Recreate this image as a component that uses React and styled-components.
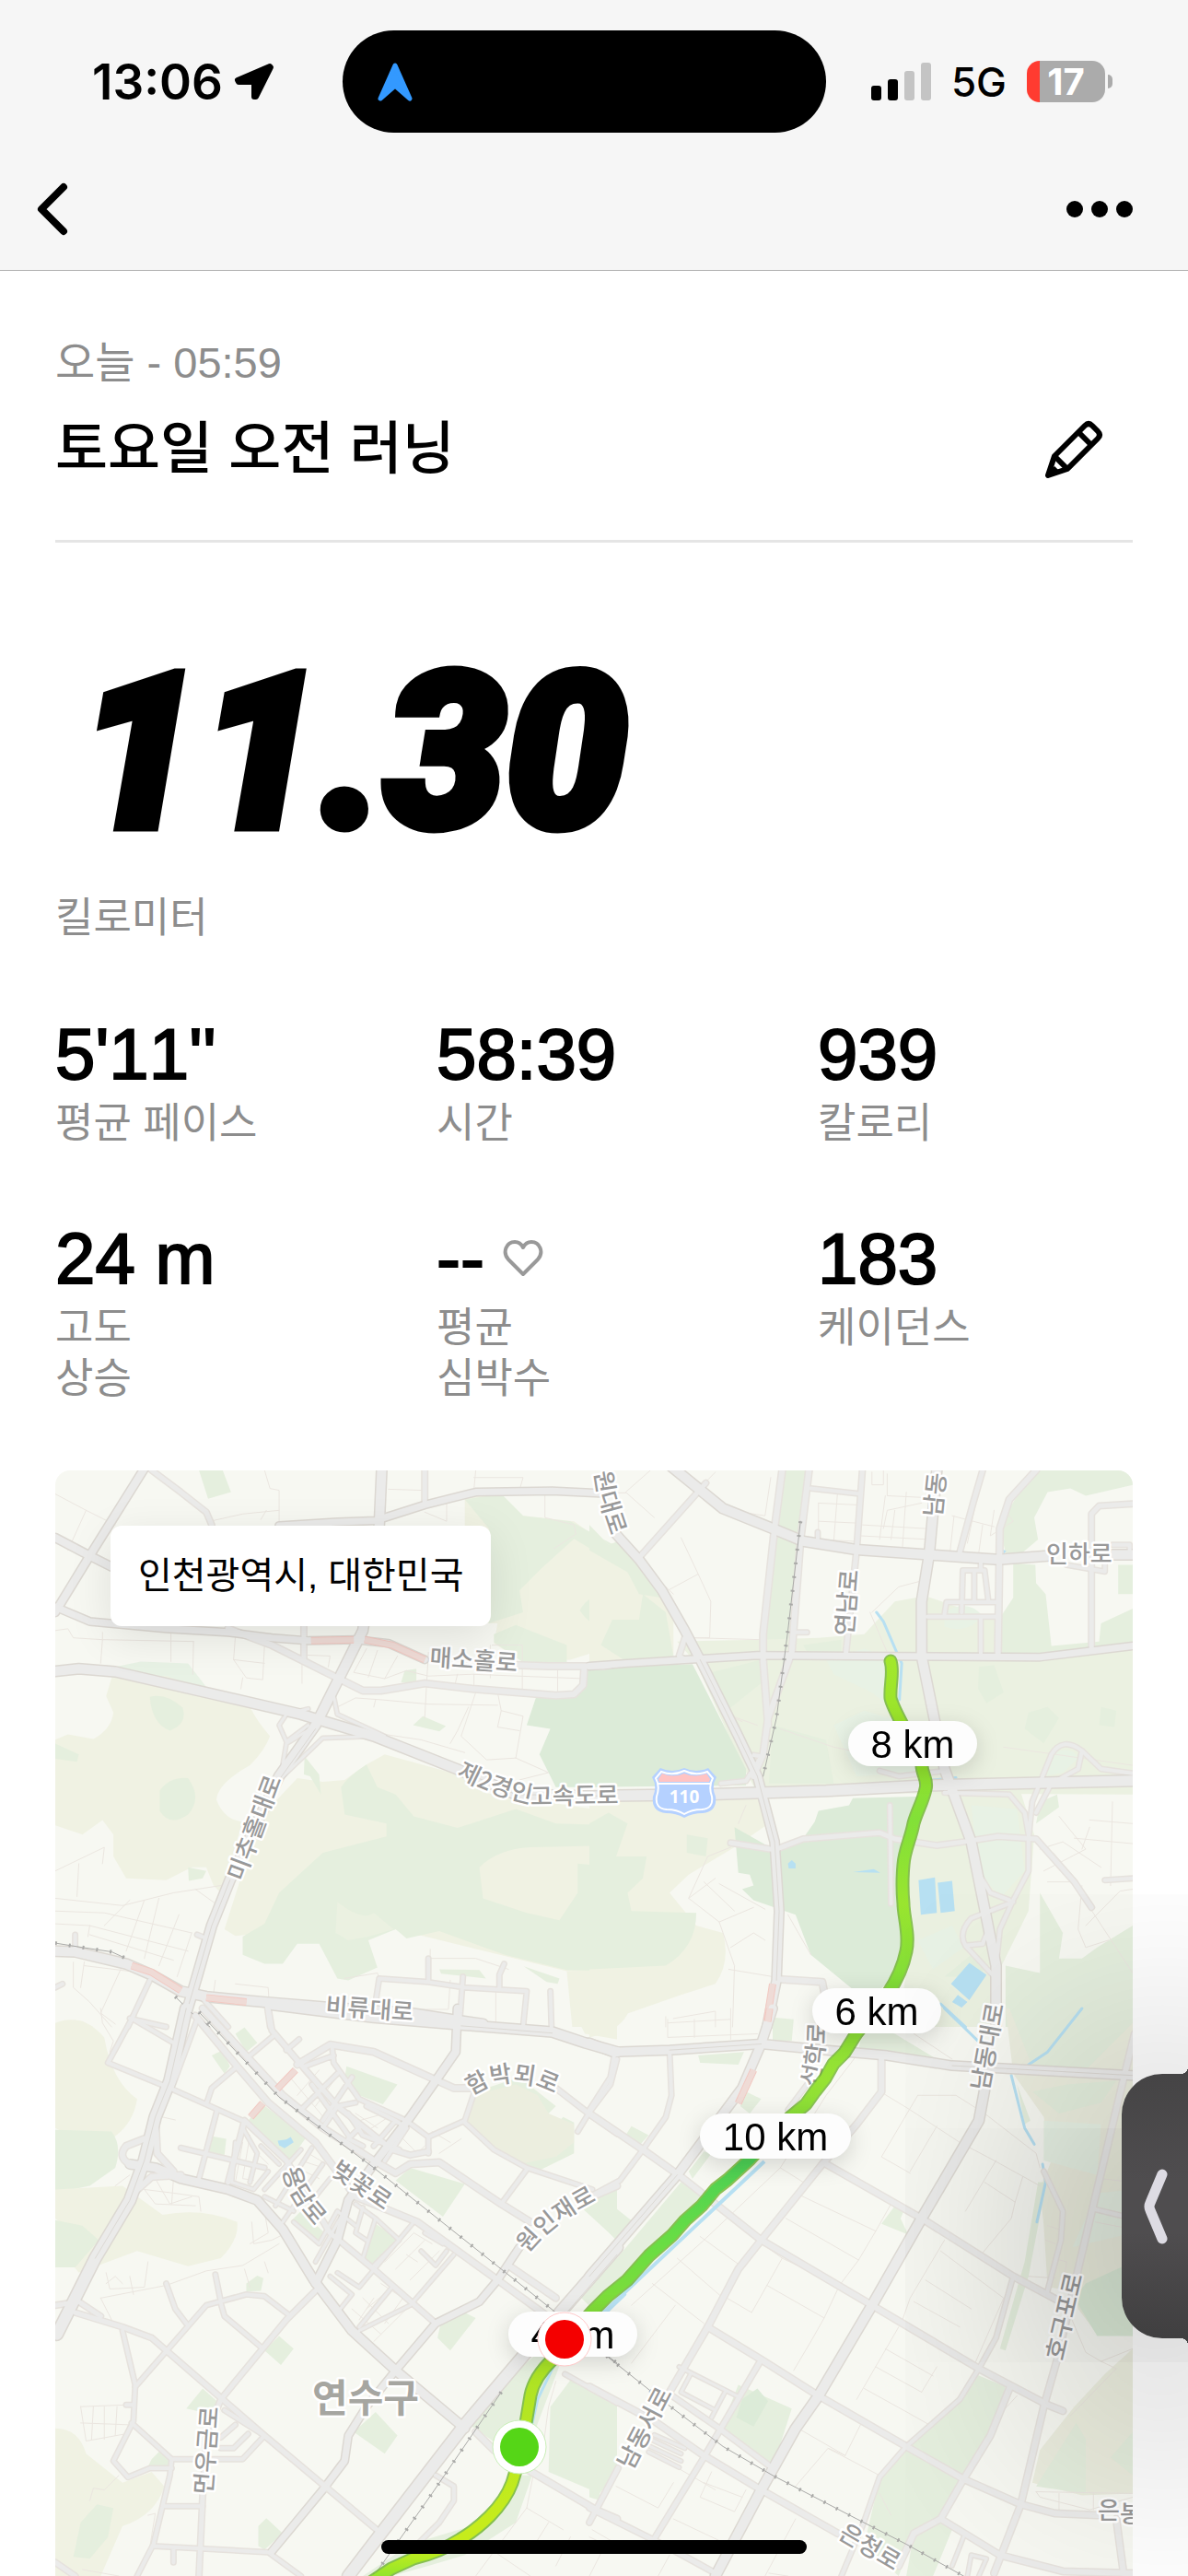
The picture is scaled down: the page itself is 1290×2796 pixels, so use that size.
import React from "react";
import styled, { createGlobalStyle } from "styled-components";

const GlobalStyle = createGlobalStyle`
  * {
    box-sizing: border-box;
  }
  body {
    margin: 0;
    background: #ffffff;
    color: #000000;
    font-family: "Liberation Sans", "Noto Sans CJK KR", sans-serif;
  }
  h1, p, dl, dt, dd {
    margin: 0;
    font-weight: 400;
  }
`;

const STATS = [
  { value: "5'11''", label: ["평균 페이스"] },
  { value: "58:39", label: ["시간"] },
  { value: "939", label: ["칼로리"] },
  { value: "24 m", label: ["고도", "상승"] },
  { value: "--", label: ["평균", "심박수"], heart: true },
  { value: "183", label: ["케이던스"] },
];

const GROUND = {
  hill: "#f0f2e3",
  mint: "#e8f2e5",
  wood: "#e5efde",
  park: "#dcebd8",
  field: "#ebf1e1",
  dusk: "#eceedf",
  lake: "#b7e0f2",
};

// Four map tiles, each in its own grid units. Roads are [width, path].
const TILES = [
  {
    at: "translate(50 1580) scale(0.3954)",
    areas: [
      ["mint", "M180 582 L260 565 L390 570 L440 635 L180 610Z"],
      ["hill", "M25 780 L60 765 L130 778 Q180 750 185 705 L165 660 L180 610 L330 605 L440 645 L560 690 Q580 730 615 770 Q600 810 560 850 Q470 900 468 945 Q490 1000 540 1005 L480 1200 L460 1180 L440 1130 L400 1130 L330 1165 L220 1160 L185 1100 L185 1040 L155 1000 L100 1040 L25 1015Z"],
      ["wood", "M285 662 Q330 650 375 692 Q390 735 340 755 Q290 735 285 662Z"],
      ["wood", "M312 920 Q340 880 390 885 Q430 940 390 985 Q340 1020 312 975Z"],
      ["wood", "M25 790 L90 820 L85 840 L25 832Z"],
      ["hill", "M880 848 L930 820 L1150 880 L1200 925 L1568 980 V1420 L1430 1415 L960 1300 L880 1320 L600 1310 L520 1318 L490 1300 L560 1080 L620 960 L690 885 L760 895 L820 890Z"],
      ["wood", "M810 910 Q830 880 880 848 L910 910 L960 930 L1010 990 L1130 1022 L1290 970 L1400 1010 L1568 1015 V1415 L1430 1412 L1260 1370 L1080 1305 L990 1325 L960 1300 L885 1330 L910 1405 L830 1440 L800 1435 L750 1340 L690 1340 L650 1395 L600 1395 L540 1370 L540 1320 L600 1285 L640 1200 L760 1090 L935 1045 L935 1010 L820 985Z"],
      ["field", "M800 1225 Q870 1280 900 1255 L955 1300 L885 1320 L830 1330 L795 1310Z"],
      ["hill", "M1190 1130 Q1240 1080 1330 1075 L1568 1070 V1130 L1460 1120 L1460 1200 L1410 1275 L1320 1255 L1200 1215Z"],
      ["hill", "M1150 110 L1250 105 L1310 165 L1450 180 L1540 245 L1568 240 V520 L1440 560 L1310 565 L1230 515 L1240 460 L1100 460 L1150 300Z"],
      ["wood", "M1150 120 L1250 105 L1310 165 L1440 180 L1568 250 V300 L1450 228 L1360 310 L1300 370 L1310 430 L1216 460 V200Z"],
      ["wood", "M1466 425 Q1490 375 1568 380 V470 Q1500 480 1466 425Z"],
      ["wood", "M1230 490 L1290 465 L1430 520 L1430 567 L1310 567 L1230 512Z"],
      ["park", "M1480 590 L1568 582 V910 L1400 910 L1355 820 L1385 750 L1320 740 L1345 665 L1460 660Z"],
      ["wood", "M420 40 L485 40 L508 100 L445 118Z"],
      ["wood", "M985 590 L1017 585 V625 L975 622Z"],
      ["wood", "M1008 740 L1035 715 L1098 742 L1080 757Z"],
      ["wood", "M1080 1410 L1190 1412 L1208 1435 L1085 1422Z"],
      ["wood", "M1312 1402 L1410 1435 L1405 1450 L1375 1445Z"],
      ["wood", "M390 1130 L440 1140 L430 1160 L392 1167Z"],
      ["wood", "M710 825 L750 875 L755 930 L725 880 L708 875Z"],
      ["hill", "M1430 1415 H1568 V1568 H1445Z"],
      ["hill", "M25 1560 Q60 1545 100 1552 L130 1568 H25Z"],
    ],
    lanes:
      "M25 105 L110 150 L190 190 M60 260 L110 150 M600 40 L615 90 L640 95 V190 M460 178 L540 160 L640 150 M590 175 L605 150 M940 92 L1030 95 M1040 155 L1100 180 V130 M1175 60 H1310 L1300 95 M1180 40 L1175 95 M1370 105 V170 L1450 190 L1455 215 L1395 255 M25 480 L60 475 L75 500 L155 505 L150 570 M155 485 V505 L405 510 M343 485 V565 M405 510 L403 600 M520 495 L515 560 L550 610 L595 615 L600 520 M515 560 L600 570 M540 610 L535 640 M660 545 L780 550 L775 580 M703 555 V625 M880 530 L845 595 L930 612 L990 590 L1050 605 L1170 600 L1478 612 M910 535 L885 608 M965 550 L930 612 M1050 540 L1040 720 M800 690 L850 665 L920 670 L1050 682 L1240 685 M905 670 L900 690 M1130 600 L1120 640 M1175 600 V650 M1225 520 H1308 V650 M1220 520 V610 M1405 590 V655 M1240 650 L1250 700 L1310 715 L1290 830 L1210 835 L1140 770 L1180 650 M1110 790 L1130 755 L1160 690 M930 765 L1030 780 L1150 815 M1290 830 L1380 870 L1300 890 M1250 700 L1240 745 L1300 755 M25 1140 L160 1075 L155 1120 M90 1120 L85 1210 M25 1215 L210 1235 L350 1200 L480 1180 M25 1250 L160 1255 L400 1310 M25 1285 L120 1290 L390 1360 M120 1290 L115 1320 M120 1315 L350 1385 M270 1220 L220 1360 M310 1215 L270 1380 M365 1260 L310 1400 M410 1190 L480 1240 M400 1310 L360 1430 M230 1220 L160 1290 M75 1390 V1460 L120 1500 L180 1568 M105 1390 L95 1460 M205 1410 L150 1530 L190 1560 M105 1400 L270 1420 M465 1440 L460 1475 M520 1450 L610 1460 L612 1490 M820 1435 L910 1420 L915 1435 M1055 1355 V1380 L1180 1380 L1270 1410 M1110 1440 L1105 1520 L1000 1520 M1235 1470 V1568",
    roads: [
      [8, "M290 40 L370 100 L440 155 L455 190"],
      [8, "M1040 40 V135 M708 470 V560"],
      [11, "M270 35 L120 275 L25 430 M25 225 L120 275 L180 305"],
      [10, "M640 192 L800 182 L905 178 L1040 135 L1180 100 L1390 97 L1520 103"],
      [9, "M500 475 L620 520 L800 610 L870 645 L920 645 L1040 625 L1170 640 L1400 658 L1450 655 L1475 630 L1478 585"],
      [10, "M25 415 L120 455 L330 475 L500 485 L620 500 L720 508 L850 505 L940 515 L1040 560"],
      [9, "M1290 575 L1380 578 L1530 578 L1568 572"],
      [7, "M905 1500 L915 1435 L1050 1445 L1150 1460 L1320 1470 L1310 1568 M1050 1445 V1380 M1145 1430 L1135 1568 M1245 1460 V1425 L1258 1395 M1385 1470 L1388 1568 M80 1315 V1355 M415 1315 L440 1325 M285 1440 L225 1568 M605 1500 L615 1568 M430 1490 L500 1568 M230 1545 L330 1568 M25 1460 L45 1450"],
      [6, "M720 740 L660 785 L640 740 L660 710 L720 695 M790 660 L800 710 L930 770 M650 850 L660 790 L735 745 M640 890 L760 775 L900 770"],
      [13, "M25 1360 L80 1362 L220 1395 L290 1425 L370 1470 L440 1485 L600 1500 L780 1515 L1000 1530 L1130 1550 L1200 1560"],
      [13, "M922 35 L915 190 L900 300 L870 480 L800 620 L740 740 L640 880 L505 1165 L455 1290 L400 1480 L370 1580"],
      [13, "M25 592 L90 585 L190 593 L440 650 L700 710 L900 770 L1140 865 L1290 930 L1568 935"],
    ],
    dualLanes: "M640 890 L740 750 M505 1165 L455 1290 L400 1480 L370 1580 M1140 865 L1290 930 L1568 935",
    rails: "M25 1338 L100 1350 L180 1362 L215 1378 M355 1485 L400 1530 L450 1568",
    rush: "M728 508 L845 505 M875 505 L950 520 L1040 560 M235 1400 L290 1418 L370 1468 M440 1488 L550 1500",
    streams: "",
  },
  {
    at: "translate(640 1580) scale(0.4146 0.3954)",
    areas: [
      ["wood", "M505 40 L575 40 L555 200 L520 540 L455 540 L480 200Z"],
      ["hill", "M0 190 L50 245 L90 230 L180 340 L220 450 V550 L0 575Z"],
      ["wood", "M0 190 L50 245 L90 230 L180 340 L190 390 L130 380 L100 320 L0 260Z M60 450 L130 450 L140 380 L200 430 L220 550 L90 560 L30 520Z"],
      ["field", "M230 510 L440 505 L600 500 L720 490 L800 400 L880 385 L1060 450 L1210 525 L1423 520 V930 L440 925 L400 850 L280 570Z"],
      ["wood", "M300 600 L450 560 L455 620 L360 700Z M560 520 L660 505 L660 540 L570 540Z M480 740 L620 780 L640 900 L470 900Z M1020 580 L1060 575 L1085 650 L1040 680 L1018 640Z M1150 705 L1200 690 L1230 720 L1190 790 L1140 750Z M1340 690 L1380 700 L1375 745 L1335 740Z"],
      ["mint", "M620 560 L720 530 L800 560 L780 620 L800 700 L740 650 L640 600Z M930 430 Q990 390 1030 440 Q990 490 930 470Z M640 740 L720 700 L850 740 L870 870 L700 880Z"],
      ["park", "M0 582 L270 572 L410 860 V905 L0 910Z"],
      ["hill", "M0 950 L440 925 L470 1010 L380 1075 L260 1150 L210 1200 L280 1290 L350 1310 Q370 1390 330 1450 L240 1480 L0 1568Z"],
      ["wood", "M0 1010 L50 980 L100 1010 L70 1100 L150 1100 L140 1160 L100 1200 L110 1250 L280 1255 Q280 1350 200 1400 L0 1410Z M255 1040 L310 1050 L305 1100 L255 1090Z"],
      ["park", "M380 1020 L490 1085 L560 1050 L590 1005 L600 975 L680 960 L690 940 L880 935 L850 1010 L820 1100 L810 1250 L830 1350 L790 1440 L720 1500 L690 1465 L580 1370 L540 1260 L430 1220 L400 1190 L430 1180 L420 1150 L390 1145Z"],
      ["field", "M880 925 L1130 925 L1165 1040 L1150 1250 L1070 1420 V1568 H900 L820 1480 L850 1300 L830 1150Z"],
      ["mint", "M1000 960 L1120 970 L1140 1140 L1080 1210 L1020 1150Z M860 1330 L950 1290 L980 1350 L900 1410Z M1210 820 Q1260 790 1280 830 L1240 870 L1190 880Z"],
      ["wood", "M1180 40 L1423 40 V80 L1300 110 L1260 90 L1200 100 L1165 170 L1175 230 L1130 270 L1090 270 L1075 190 L1120 110Z"],
      ["wood", "M1110 295 L1168 300 L1170 350 L1195 380 L1210 522 L1335 510 L1340 460 L1423 420 V530 L1180 555 L1070 555 L1072 450 L1110 390Z M1385 300 H1423 V380 H1385Z"],
      ["wood", "M1170 1010 L1230 965 L1225 930 L1180 950Z M1423 1290 L1330 1350 L1290 1380 L1230 1380 L1240 1310 L1180 1200 L1180 1420 L1090 1400 V1568 H1423Z M930 1430 L1000 1370 L1040 1410 L990 1430Z"],
      ["lake", "M862 1165 L905 1158 L910 1255 L868 1260Z M912 1172 L950 1167 L957 1250 L920 1255Z M995 1392 L1040 1425 L995 1495 L947 1450Z M965 1480 L990 1500 L975 1515 L950 1500Z M520 1120 L530 1110 L540 1120 V1133 H522Z M1078 255 L1092 262 L1085 270Z M690 1143 L745 1135 L762 1145Z"],
    ],
    lanes:
      "M160 40 L95 100 L170 170 M0 102 H95 M330 45 L260 120 M360 145 L400 155 L460 165 L475 60 M205 370 L285 325 L240 225 M285 325 L318 400 L315 500 L250 500 M200 360 L220 380 M275 500 L450 505 M600 130 L700 135 M600 180 L700 185 M600 230 L695 235 M650 100 L640 235 M600 130 V215 M740 45 V80 H770 V40 M780 50 V110 L880 115 M830 100 L820 250 M775 110 L760 230 M870 130 L780 150 L770 200 M715 190 L880 200 M710 220 L890 230 M800 150 L790 230 M950 165 L1060 195 M955 165 L945 260 M1010 140 L990 240 M1060 150 L1050 220 L1110 180 L1085 145 M1030 190 L1020 265 M740 430 L810 360 L865 345 M735 430 L780 540 M500 750 L640 800 L780 830 M400 730 L360 710 L440 740 M1085 800 L1423 850 M370 1075 L310 1100 L260 1215 L340 1280 L430 1240 M340 1175 L460 1245 M260 1215 L330 1160 M300 1170 L380 1250 M340 1280 L380 1400 L375 1568 M370 1350 L430 1310 L460 1330 M200 1540 V1568 M220 1545 L330 1525 V1568 M365 1410 L480 1430 M580 1370 L520 1260 M1230 990 L1300 1080 L1190 1140 M1180 1080 L1240 1060 L1340 1130 M1270 1050 L1423 1065 M1310 1000 L1423 1010 M1310 1020 L1290 1080 M1370 950 L1365 1180 M1215 1090 L1280 1170 L1200 1170 M1290 1180 L1280 1300 L1300 1350 L1360 1330 M1423 1190 L1390 1195 L1300 1290 M1310 1240 L1423 1420 M410 960 L390 1010",
    roads: [
      [7, "M580 90 L710 105 M885 442 H1070 M930 435 L935 402 H1070 M1025 445 V545 M975 430 L978 315 H1035 L1045 400 M1008 315 V400 M1250 300 L1350 318 V290 M1370 245 H1415 V262 M1025 285 V310 M535 485 H570 M598 210 V240"],
      [8, "M305 75 L130 280 M1030 40 L1005 130 L970 265 M1315 530 V160 L1335 138 L1423 132 M250 560 L235 550 L250 500"],
      [8, "M715 40 L700 258 L672 540"],
      [9, "M505 40 L485 200 L455 490 V560 L468 740"],
      [9, "M575 40 L553 230 L530 540 L468 720 L455 820 L430 880"],
      [9, "M1170 40 L1100 120 L1075 200 L1070 545"],
      [13, "M215 30 L350 145 L480 200 L560 235 L700 258 L890 272 L1070 285 L1200 275 M1370 272 H1423"],
      [7, "M345 900 L410 893 L450 825 L430 822 M787 960 L790 1230 M760 865 L810 880 L930 865 M1350 1165 L1423 1160"],
      [8, "M370 1063 L485 1082 L560 1052 L760 1035 L800 1052 L910 1070 L980 1060 L1070 1045 L1170 1052 L1270 1170 L1315 1240"],
      [9, "M497 1437 L610 1445 L620 1500"],
      [7, "M1423 872 L1340 860 L1290 810 Q1240 770 1210 820 L1160 950 L1150 1050 V1140 L1110 1220 L1075 1300 L1065 1400 M1290 810 L1280 860 L1210 900 L1170 980 M930 925 L1100 930 L1140 980 L1150 1040 M1010 1130 L1050 1200 L1100 1220 M1110 1225 L1000 1270 Q965 1310 985 1345 L1030 1340 L1045 1300 M985 1345 L1060 1430"],
      [10, "M0 578 L100 570 L440 548 L700 550 L1180 553 L1423 522"],
      [13, "M910 40 L890 270 L870 400 V550 L930 860 L1000 1060 L1065 1400 V1568"],
      [12, "M65 210 L130 285 L190 370 L250 480 L290 560 L390 770 L440 880 L460 960 L485 1060 L497 1250 L490 1440 L465 1568"],
      [14, "M60 933 L300 930 L620 920 L890 905 L1423 892"],
    ],
    dualLanes: "M290 560 L390 770 L440 880 L460 960 L485 1060 L497 1250 L490 1440",
    rails: "M553 180 L520 480 L510 560 L490 720 L455 880",
    rush: "M480 1450 L465 1550",
    streams: "M752 430 L770 455 L805 540 L818 570 L812 670 M920 1505 L985 1568 M900 890 L960 884",
  },
  {
    at: "translate(50 2180) scale(0.3954 0.3929)",
    areas: [
      ["hill", "M25 40 Q100 10 160 80 Q180 200 250 250 Q240 320 180 360 L90 365 L25 330Z"],
      ["wood", "M25 335 L180 340 Q210 380 190 440 L120 490 L25 510Z"],
      ["hill", "M25 500 L210 490 L320 570 Q430 550 525 590 Q530 640 480 690 L390 712 L250 670 L90 730 Q50 690 80 620 L25 580Z"],
      ["wood", "M25 585 L100 600 L145 640 L80 715 H25Z"],
      ["hill", "M25 1160 Q90 1160 110 1230 L210 1310 L290 1280 L325 1320 Q300 1400 210 1430 L150 1568 H25Z"],
      ["wood", "M95 1420 L140 1370 L185 1380 L170 1460 L120 1520 L75 1515Z"],
      ["wood", "M595 265 L715 355 L670 420 L555 310Z M520 70 L545 52 L580 95 L550 120Z M455 130 L485 115 L505 160 L490 180Z M825 160 L965 210 L925 265 L860 240 L820 195Z"],
      ["wood", "M450 352 L495 360 L490 405 L440 400Z M1000 440 L1150 485 L1090 575 L960 475Z M1470 550 L1568 480 V640Z M905 595 L965 635 L900 710 L870 690Z M700 560 L765 620 L750 655 L675 585Z"],
      ["wood", "M550 760 L580 738 L597 745 L590 780 L550 782Z M640 905 L680 940 L645 985 L600 945Z M1085 865 L1140 835 L1180 855 L1110 945 L1075 910Z M430 1050 L475 1090 L450 1120 L385 1105Z"],
      ["wood", "M905 1115 L965 1180 L930 1230 L845 1170Z M605 1408 L650 1450 L600 1495 L583 1485 V1430Z M290 1245 L315 1220 L345 1250 V1270 L280 1265Z"],
      ["wood", "M1180 230 L1300 190 L1400 270 L1380 290Z M1420 300 L1450 315 V400 L1360 445 L1300 430Z"],
      ["dusk", "M1170 240 L1290 210 L1350 240 L1380 290 L1450 320 V370 L1400 410 L1300 430 L1230 390 L1155 310Z"],
      ["wood", "M1150 1140 L1340 960 L1420 960 L1330 1200 L1290 1240Z M1445 1020 L1568 1080 V1280 L1520 1340 L1380 1280 L1385 1100Z M1568 680 L1470 800 L1500 830 L1568 780Z M1300 1290 L1335 1290 L1290 1420 L1150 1510 L1050 1540 L950 1568 H870 L1000 1480 L1200 1420Z"],
      ["hill", "M1445 0 H1568 V85 L1480 70Z"],
      ["lake", "M636 365 L660 362 L672 355 L680 370 L655 386 L640 378Z"],
    ],
    lanes:
      "M150 0 L155 40 L185 90 L175 120 M320 300 L355 308 M190 490 L230 460 M270 500 L350 510 L420 520 L425 560 M300 470 L340 540 L400 520 M350 470 L345 540 M270 500 L300 540 L410 545 M565 590 L570 650 L620 640 L660 620 M600 560 L610 620 L560 650 M150 800 L330 765 L440 725 L540 710 L640 650 M165 730 L175 775 L270 770 L280 700 M165 760 L190 740 L210 760 M230 740 L240 790 M150 800 L180 860 M545 720 L560 770 M600 700 L610 730 M95 1100 L225 1095 M95 1145 L225 1150 M130 1100 L125 1190 M160 1100 V1190 M195 1100 L190 1180 M95 1100 L110 1195 L220 1175 M120 1360 L130 1325 L160 1330 L200 1290 M280 1400 L300 1395 L280 1520 M670 190 L770 310 M700 170 L770 250 M690 240 L750 170 M740 270 L790 200 M850 290 L910 330 M860 310 L930 290 M880 340 L940 300 M540 370 L520 480 M560 380 L610 430 M560 350 L540 470 L570 475 M690 440 L750 470 M700 420 L760 440 M720 400 L770 430 M970 350 L1020 400 L1040 380 M1060 340 L1110 370 M1080 400 L1140 360 M930 700 L1010 620 L1060 650 M960 720 L1040 640 M990 680 L1020 700 M1000 750 L1080 670 M880 830 L950 770 M840 830 L920 900 M870 800 L940 870 M860 860 L900 800 M900 920 L990 830 M920 760 L980 800 L930 870 M1340 1280 L1320 1380 L1420 1440 M1320 1380 L1230 1500 L1330 1568 M1380 1420 L1330 1500 M1440 1460 L1400 1540 M1230 1500 L1180 1568 M1500 1440 L1568 1480 M1400 1030 L1380 1100 L1360 1250 M100 1550 L200 1568",
    roads: [
      [6, "M700 390 L600 500 M730 385 L630 545 M760 430 L650 590 M520 370 L510 480 L570 500 L610 450 M540 330 L580 400 L560 480 M590 380 L640 430 M600 520 L680 560 M780 470 L740 520 L700 500"],
      [7, "M785 100 L790 150 L860 250 L990 310 L1050 355 M800 180 L700 280 M840 190 L760 310 M850 260 L800 270 L760 330 M830 290 L870 350 L970 390 M880 270 L960 310 L900 380 M960 310 L990 330 L930 420 M870 380 L830 360 L860 330 M710 160 L790 130 M730 210 L830 350"],
      [6, "M850 540 L905 580 L970 640 L900 710 M905 580 L870 690 M1010 590 L860 770 L800 730 M1120 680 L1000 820 L860 890 M1030 670 L1070 710 L1100 670 M870 550 L850 620 L880 640 M780 740 L840 790 L800 840 M950 770 L860 880 M850 600 L800 560 L750 650 L680 590 M740 700 L830 540 M1040 620 L1090 650"],
      [7, "M170 150 L340 220 L540 310 M170 150 L240 20 M240 30 L350 95 M525 160 L455 220 L440 265 M470 280 L420 470 M370 385 L600 440 M560 130 L625 75 M660 115 L695 85 M345 220 L415 30"],
      [8, "M545 310 L500 480 M545 310 L660 420 L780 620 L900 720 L1070 870"],
      [7, "M245 1045 L440 820 L550 790 L600 795 L665 845 M480 815 L490 850 L590 935 M330 760 L355 830 L385 870 M465 735 L480 810"],
      [7, "M210 890 L245 1040 L240 1140 L185 1250 L225 1295 L285 1270 H345 M235 1145 L345 1245 L340 1290 L295 1480 L250 1568 M345 1245 H540 L600 1180 M325 1375 H430 M295 1485 L610 1502 L700 1568 M350 1490 V1530 M480 1215 H515 L555 1175 M480 1185 L520 1150 M490 1110 L600 1180 M220 1095 H240"],
      [8, "M740 780 L660 860 L480 1080 L440 1180 L430 1350 L420 1568"],
      [7, "M1180 220 L1150 310 L1050 355 V400 M1150 315 L1230 390 L1320 440 L1500 500 M1320 445 L1250 540 M1568 140 L1550 210 L1490 290 L1460 340 M1070 1290 L1120 1320 V1360 L1080 1420 L1020 1480 M1425 1010 L1568 1090"],
      [8, "M610 0 L620 60 L700 155 L800 270 L950 390 L1000 405 L1050 395 M1400 220 L1490 290 L1568 345"],
      [9, "M690 155 L780 100 L900 120 L1120 220 L1180 220 M1568 490 L1500 520 M1270 710 L1400 800"],
      [9, "M410 20 L525 160 L610 260 L740 370 L850 520 L1020 590 L1130 670 L1240 750 L1390 860"],
      [9, "M430 0 L650 240 L760 330 L900 420 L960 455 L1000 430 L1080 425 L1250 540 L1330 590"],
      [10, "M1300 660 L1240 750 L1190 810 L1070 870 L960 1000 L880 1100 L830 1180 L820 1250 L760 1330 L620 1500"],
      [11, "M1130 0 L1125 120 L1070 200 L1000 300 L900 430 L830 530 L800 640 L740 760"],
      [8, "M80 840 L210 880 L290 910 L600 1180 L920 1450 M25 1530 L80 1568 M25 820 L90 810 L150 850"],
      [12, "M230 430 L300 440 L370 470 L500 500 L580 530 L650 610 L735 750 L840 890 L960 1000 L1150 1160"],
      [9, "M270 360 L220 380 Q195 410 230 430 M300 300 L305 400 L350 450 M1180 1170 L1230 1220 L1350 1290 L1510 1385 L1568 1410 M240 510 L290 465 L370 460"],
      [13, "M620 -10 L900 25 L1140 45 L1390 65 L1480 95 L1568 120"],
      [15, "M385 0 L340 200 L300 300 L270 420 L230 530 L135 690 L30 900"],
      [15, "M1568 660 L1420 830 L1150 1150 L920 1450 L830 1568"],
    ],
    dualLanes: "M385 0 L340 200 L300 300 L270 420 L230 530 L135 690 M1568 680 L1430 840 M1140 48 L1390 68",
    rails: "M420 10 L640 245 L900 440 L1250 720 L1400 840 M1530 950 L1568 980 M1250 1060 L1060 1340 L900 1568",
    rush: "M685 170 L635 222 M595 262 L562 300",
    streams: "M1590 790 L1400 975 L1350 1080 L1325 1190",
  },
  {
    at: "translate(640 2180) scale(0.4146 0.3929)",
    areas: [
      ["hill", "M0 0 H105 Q90 60 0 80Z"],
      ["dusk", "M1090 0 H1423 V905 L1330 900 L1280 830 L1270 780 L1200 770 L1190 600 L1180 500 L1210 420 L1190 300 L1110 180Z"],
      ["dusk", "M1423 940 L1350 1010 L1270 1100 L1180 1220 L1160 1310 L1290 1345 L1423 1340Z"],
      ["wood", "M1275 1145 L1300 1190 V1340 L1170 1320Z M1365 1240 L1423 1170 V1290Z M1160 230 L1250 210 L1380 200 L1340 260 L1230 290Z M1100 0 H1423 V40 L1300 170 L1160 160Z"],
      ["park", "M1300 760 L1423 700 V905 L1330 905 L1270 800Z"],
      ["mint", "M1190 310 L1340 320 L1330 460 L1190 420Z M1330 510 L1423 500 V620 L1265 660Z"],
      ["wood", "M1197 480 L1150 740 L1090 945 L1075 940 L1140 700 L1175 480Z M1120 210 L1155 310 L1140 320Z M1010 1010 L1090 1045 L1060 1150 L980 1300 L920 1410 L850 1450 L810 1568 L720 1480 L760 1300 L830 1210 L970 1080Z"],
      ["wood", "M390 1040 L530 1105 L480 1270 L345 1160Z M0 1080 L50 1090 V1200 L15 1260 L30 1360 L0 1350Z M0 780 L240 480 L320 530 L60 800 L0 850Z M720 50 L800 70 L910 140 L700 130Z M285 130 L405 120 L390 155 L290 150Z"],
      ["park", "M400 1080 L440 1050 L468 1085 L430 1155 L385 1130Z"],
      ["wood", "M800 545 L825 555 L815 580 L835 625 L765 595Z M0 560 L20 510 L115 590 L70 640Z M410 230 L450 250 L420 290 L395 270Z M110 325 L155 350 L130 380 L95 350Z M930 1410 L950 1440 L900 1568 H830 L850 1450Z M480 25 L535 30 L530 90 L480 90Z M300 395 L320 400 L270 470 L260 450Z"],
    ],
    lanes:
      "M205 30 V80 L440 70 M275 30 V80 M370 0 V85 M205 40 L370 30 M770 235 L840 280 L970 370 M860 240 L960 240 L1035 290 L1170 400 L1180 440 M860 240 L765 410 L840 455 M910 325 L840 450 M970 370 L1060 420 L1180 490 M1135 465 L1115 535 L1035 480 M1115 535 L1105 580 L1030 675 M1065 420 L985 560 M500 440 L560 480 L540 510 L750 615 L705 695 L515 580 M750 615 L790 540 M705 695 L655 765 L505 690 L440 640 M505 690 L425 840 L360 800 M465 765 L615 855 L580 920 M615 855 L655 765 M535 1000 L580 920 M700 130 L620 240 L500 440 L300 640 L110 820 M290 630 L395 710 M230 690 L350 800 M165 760 L300 870 M225 820 L110 980 M920 670 L1085 800 M880 750 L1000 830 M850 810 L970 880 M930 640 L840 800 L820 860 M1085 800 L1010 980 M810 880 L700 1080 M775 940 L900 1015 M750 990 L870 1060 M720 1050 L840 1120 L890 1150 M870 1060 L910 990 M740 820 L700 900 M555 1165 L670 1235 L710 1150 M670 1235 L625 1215 L540 1320 M625 1215 L760 1290 M70 1320 L180 1380 L220 1310 M200 1250 L330 1330 M320 1280 L290 1350 L380 1390 L410 1330 M300 1310 L400 1350 M220 1410 L360 1480 L400 1400 M0 1460 L60 1490 M40 1485 L0 1568 M210 1510 L180 1568 M540 1410 L460 1568 M470 1560 L520 1568 M1260 850 L1300 950 L1340 975 L1423 940 M1340 975 L1380 995 L1260 1125 M1200 600 L1230 610 M1195 640 L1220 650 M1215 690 L1250 700 L1240 760 M1150 740 L1220 745 M1170 1335 L1180 1350 L1310 1385 L1423 1350 M1170 1335 L1423 1340 M1230 1340 V1390 M1320 1340 V1385 M1085 1110 L1120 1070 M1340 470 L1423 480 M1325 590 L1423 610 M850 70 L950 140 M760 1340 L790 1400",
    roads: [
      [7, "M65 130 L55 190 L0 280 M210 120 L215 240 L200 300 L140 390 L80 475 L0 520 M570 210 L520 280"],
      [6, "M235 990 L385 1070 M265 1010 L240 1060 L330 1110 M355 1060 L320 1130 M160 1190 L240 1230 M155 1208 L240 1250 M155 1225 L235 1268 M170 1178 L250 1215 M950 1540 L980 1460 M990 1568 L1000 1510 L1040 1520 L1020 1568"],
      [7, "M1325 555 L1423 580 M1190 450 L1240 560 L1235 640 L1200 780 M1110 740 L1065 910 L1020 995 L970 1080 L830 1210 L760 1295 L715 1430 L660 1568"],
      [9, "M620 430 L870 580 L1110 740 L1225 805"],
      [8, "M210 1065 L340 1160 L480 1270 M450 970 L300 1240 L170 1465 M75 1270 L0 1420 M0 1380 L200 1485 L330 1560"],
      [9, "M0 290 L140 390 L240 465 L450 640 L740 820 L1020 995 L1200 1095 L1240 1112"],
      [9, "M765 140 V230 L700 320 L610 430 L450 640 L390 720 L310 880 L210 1060"],
      [9, "M310 880 L450 970 L600 1070 L830 1210 L980 1300 L1130 1370 L1220 1395 L1330 1400 M0 1045 L170 1140 L300 1235 L450 1330 L650 1450"],
      [9, "M1100 1050 L1050 1180 L980 1300 L920 1410 L850 1450 L810 1540 M920 1410 L1075 1510 L1240 1555 L1423 1560 M1380 1410 L1400 1568"],
      [13, "M1035 225 L1020 310 L870 580 L740 820 L600 1070 L540 1160 L450 1330 L330 1568"],
      [9, "M1428 70 L1400 190 L1280 720 L1225 970 L1190 1100 L1130 1370 L1060 1560"],
      [12, "M0 95 L60 120 L210 115 L450 98 L620 115 L780 130 L950 158 L1423 185"],
      [12, "M480 0 L450 98 L400 220 L230 460 L0 740"],
    ],
    dualLanes: "M210 115 L450 98 M950 158 L1423 185 M230 460 L0 740",
    rails: "M45 960 L200 1090 L350 1210 L480 1290 L700 1410 L830 1480 L980 1568",
    rush: "M430 170 L390 262 M472 0 L467 36",
    streams: "M930 0 L1023 95 M1290 0 L1200 120 L1150 155 M1105 185 L1140 330 L1165 375 M1187 430 L1195 480 L1172 590",
  },
];

const ROUTE =
  "M967 1803 C971 1815 966 1828 967 1843 C970 1858 992 1890 1001 1916 C1001 1926 1008 1932 1005 1942 C1002 1956 996 1965 992 1979 C989 1996 982 2008 981 2024 Q979 2046 981 2066 C981 2080 988 2100 984 2118 C980 2138 972 2152 964 2164 L930 2207 L917 2228 L905 2240 L896 2256 L885 2270 L875 2284 L858 2298 L838 2318 L814 2344 L790 2366 L777 2376 L762 2394 L744 2410 L730 2426 L705 2448 L681 2475 L660 2492 L644 2508 L620 2535 L600 2561 Q580 2580 576 2600 L570 2636 Q566 2665 556 2695 C546 2722 520 2744 500 2756 Q478 2770 449 2777 L425 2788 L395 2808";

const ROAD_NAMES = [
  { id: "maesohol", name: "매소홀로", d: "M466 1808 L570 1815" },
  { id: "expressway", name: "제2경인고속도로", d: "M495 1928 Q540 1952 585 1959 L700 1957" },
  { id: "michuhol", name: "미추홀대로", d: "M264 2043 L310 1920" },
  { id: "biryu", name: "비류대로", d: "M353 2186 L470 2195" },
  { id: "wondae", name: "원대로", d: "M646 1598 Q648 1628 670 1684" },
  { id: "namdongNorth", name: "남동", d: "M1022 1647 L1028 1588" },
  { id: "yeonnam", name: "연남로", d: "M926 1776 L933 1690" },
  { id: "inha", name: "인하로", d: "M1136 1696 H1230" },
  { id: "namdong", name: "남동대로", d: "M1073 2270 L1092 2165" },
  { id: "seonhak", name: "선학로", d: "M887 2266 Q898 2230 896 2180" },
  { id: "hambakmoe", name: "함박뫼로", d: "M512 2275 Q560 2241 624 2286" },
  { id: "beotkkot", name: "벚꽃로", d: "M358 2359 L430 2408" },
  { id: "yongdam", name: "용담로", d: "M307 2355 Q314 2392 358 2432" },
  { id: "woninjae", name: "원인재로", d: "M573 2446 Q600 2410 666 2380" },
  { id: "meonugeum", name: "먼우금로", d: "M230 2708 L238 2600" },
  { id: "hogupo", name: "호구포로", d: "M1154 2563 L1179 2455" },
  { id: "namdongseo", name: "남동서로", d: "M686 2682 L734 2590" },
  { id: "euncheong", name: "은청로", d: "M909 2754 L990 2802" },
  { id: "eunbong", name: "은", d: "M1192 2734 L1240 2734" },
];

const SPLITS = [
  { label: "8 km", x: 991, y: 1893, width: 140 },
  { label: "6 km", x: 952, y: 2183, width: 140 },
  { label: "10 km", x: 842, y: 2319, width: 164 },
  { label: "4 km", x: 622, y: 2534, width: 140 },
];

const RouteMap = () => (
  <MapSvg viewBox="60 1596 1170 1200" preserveAspectRatio="xMidYMin slice" role="img" aria-label="러닝 경로">
    <defs>
      <linearGradient id="pace" gradientUnits="userSpaceOnUse" x1="0" y1="1796" x2="0" y2="2796">
        <stop offset="0" stopColor="#a3e82c" />
        <stop offset="0.1" stopColor="#97e22a" />
        <stop offset="0.18" stopColor="#82e038" />
        <stop offset="0.27" stopColor="#99e52f" />
        <stop offset="0.36" stopColor="#80dc38" />
        <stop offset="0.46" stopColor="#97e333" />
        <stop offset="0.51" stopColor="#86dc38" />
        <stop offset="0.55" stopColor="#4ccf55" />
        <stop offset="0.63" stopColor="#66dd45" />
        <stop offset="0.71" stopColor="#80dd38" />
        <stop offset="0.78" stopColor="#ade325" />
        <stop offset="0.94" stopColor="#c6ec1c" />
        <stop offset="0.97" stopColor="#c6ec1c" />
        <stop offset="1" stopColor="#93e62c" />
      </linearGradient>
    </defs>
    {TILES.map((tile) => (
      <g key={tile.at} transform={tile.at}>
        {tile.areas.map(([kind, d]) => (
          <path key={d} d={d} fill={GROUND[kind]} />
        ))}
        <Line d={tile.streams} stroke="#b7e0f2" strokeWidth="3" />
        <Line d={tile.lanes} stroke="#ebe6e0" strokeWidth="1" />
      </g>
    ))}
    {TILES.map((tile) => (
      <g key={tile.at} transform={tile.at}>
        {tile.roads.map(([width, d]) => (
          <Line key={d} d={d} stroke={width > 9 ? "#dcd8d2" : "#e6e2dd"} strokeWidth={width} />
        ))}
      </g>
    ))}
    {TILES.map((tile) => (
      <g key={tile.at} transform={tile.at}>
        {tile.roads.map(([width, d]) => (
          <Line key={d} d={d} stroke="#ebebea" strokeWidth={width - 3} />
        ))}
        <Line d={tile.dualLanes} stroke="#dcd9d4" strokeWidth="1" />
        <Line d={tile.rush} stroke="#f2c9c2" strokeWidth="8" $butt />
        <Line d={tile.rush} stroke="#efdbd6" strokeWidth="6" $butt />
        <Line d={tile.rails} stroke="#aaaaa8" strokeWidth="1" />
        <Line d={tile.rails} stroke="#aaaaa8" strokeWidth="4" strokeDasharray="2 13" $butt />
      </g>
    ))}

    {ROAD_NAMES.map((road) => (
      <g key={road.id}>
        <path id={road.id} d={road.d} fill="none" />
        <RoadName>
          <textPath href={`#${road.id}`}>{road.name}</textPath>
        </RoadName>
      </g>
    ))}
    <RoadName x="1216" y="2738">봉</RoadName>
    <DistrictName x="339" y="2618">연수구</DistrictName>

    <g>
      <path
        d="M717 1919 Q730 1925 743 1919 Q756 1925 769 1919 L778 1929 Q772 1939 777 1950 Q779 1966 763 1968 Q752 1968 743 1973 Q734 1968 723 1968 Q707 1966 709 1950 Q714 1939 708 1929Z"
        fill="#b5d1ff"
      />
      <path
        d="M718 1923 Q731 1928 743 1922 Q755 1928 768 1923 L774 1930 Q769 1939 773 1950 Q775 1963 762 1964 Q751 1964 743 1969 Q735 1964 724 1964 Q711 1963 713 1950 Q717 1939 712 1930Z"
        fill="#b5d1ff"
        stroke="#ffffff"
        strokeWidth="2"
      />
      <path d="M719 1925 Q731 1930 743 1925 Q755 1930 767 1925 L771 1931 L770 1934 H716 L715 1931Z" fill="#ffc4c4" />
      <path d="M715 1936 H771" stroke="#ffffff" strokeWidth="2" />
      <ShieldNumber x="743" y="1957">110</ShieldNumber>
    </g>

    <path d="M830 2346 L766 2406 L652 2513" fill="none" stroke="#b7e0f2" strokeWidth="4" />
    <path d={ROUTE} fill="none" stroke="#6db32c" strokeOpacity="0.8" strokeWidth="15" strokeLinecap="round" strokeLinejoin="round" />
    <path d={ROUTE} fill="none" stroke="url(#pace)" strokeWidth="11" strokeLinecap="round" strokeLinejoin="round" />

    {SPLITS.map((split) => (
      <Split key={split.label}>
        <rect x={split.x - split.width / 2} y={split.y - 25} width={split.width} height="49" rx="25" fill="#fdfdfd" />
        <SplitText x={split.x} y={split.y + 15}>
          {split.label}
        </SplitText>
      </Split>
    ))}
    <circle cx="613" cy="2539" r="29" fill="#ffffff" stroke="#ffc9c9" />
    <circle cx="613" cy="2539" r="21" fill="#f40000" />
    <circle cx="564" cy="2656" r="29" fill="#ffffff" stroke="#c9efb8" />
    <circle cx="564" cy="2656" r="21" fill="#55d617" />
  </MapSvg>
);

export default function App() {
  return (
    <>
      <GlobalStyle />
      <Header>
        <StatusBar>
          <Clock>
            13:06
            <svg width="44" height="42" viewBox="0 0 44 42" aria-hidden="true">
              <path d="M39 4 L4 19 L5 21 H22 V37 H24 L40 5Z" fill="#000" stroke="#000" strokeWidth="6" strokeLinejoin="round" />
            </svg>
          </Clock>
          <Island>
            <svg width="38" height="42" viewBox="0 0 38 42" aria-hidden="true">
              <path d="M19 3 L3 39 L19 25 L35 39Z" fill="#3399ff" stroke="#3399ff" strokeWidth="5" strokeLinejoin="round" />
            </svg>
          </Island>
          <Signals>
            <Bars>
              <Bar $height={16} $on />
              <Bar $height={23} $on />
              <Bar $height={32} />
              <Bar $height={41} />
            </Bars>
            <Network>5G</Network>
            <Battery>
              <BatteryBody>17</BatteryBody>
              <BatteryCap />
            </Battery>
          </Signals>
        </StatusBar>
        <Nav>
          <IconButton aria-label="뒤로">
            <svg width="34" height="58" viewBox="0 0 34 58" fill="none">
              <path d="M29 5 L5 29 L29 53" stroke="#000" strokeWidth="8" strokeLinecap="round" strokeLinejoin="round" />
            </svg>
          </IconButton>
          <IconButton aria-label="더 보기">
            <svg width="72" height="18" viewBox="0 0 72 18">
              <circle cx="9" cy="9" r="9" />
              <circle cx="36" cy="9" r="9" />
              <circle cx="63" cy="9" r="9" />
            </svg>
          </IconButton>
        </Nav>
      </Header>

      <Content>
        <RunHeader>
          <RunDate>오늘 - 05:59</RunDate>
          <TitleRow>
            <Title>토요일 오전 러닝</Title>
            <IconButton aria-label="이름 편집">
              <svg width="64" height="64" viewBox="0 0 64 64" fill="none" stroke="#000" strokeWidth="6" strokeLinejoin="round">
                <path d="M4 60 L11 39 L44 6 Q48 2 52 6 L58 12 Q62 16 58 20 L25 53Z" />
                <path d="M37 13 L51 27 M11 39 L25 53 M9 52 L13 56" />
              </svg>
            </IconButton>
          </TitleRow>
        </RunHeader>

        <Distance>11.30</Distance>
        <Label>킬로미터</Label>

        <Stats>
          {STATS.map((stat) => (
            <Stat key={stat.label.join(" ")}>
              <Value>
                {stat.value}
                {stat.heart && (
                  <svg width="44" height="42" viewBox="0 0 44 42" fill="none" aria-hidden="true">
                    <path
                      d="M22 38 L6 22 C-1 14 4 3 13 3 C17 3 20 5 22 9 C24 5 27 3 31 3 C40 3 45 14 38 22Z"
                      stroke="#999999"
                      strokeWidth="4"
                      strokeLinejoin="round"
                    />
                  </svg>
                )}
              </Value>
              <dt>
                {stat.label.map((line) => (
                  <Label as="span" key={line}>
                    {line}
                  </Label>
                ))}
              </dt>
            </Stat>
          ))}
        </Stats>

        <MapCard>
          <RouteMap />
          <Place>인천광역시, 대한민국</Place>
        </MapCard>
      </Content>

      <Drawer aria-label="패널 열기">
        <svg width="30" height="84" viewBox="0 0 30 84" fill="none">
          <path d="M22 7 L9 38 Q7 42 9 46 L22 77" stroke="#dddbe3" strokeWidth="11" strokeLinecap="round" />
        </svg>
      </Drawer>
      <HomeIndicator />
    </>
  );
}

const Header = styled.header`
  background: #f6f6f6;
  border-bottom: 1px solid #b0b0b0;
`;
const StatusBar = styled.div`
  display: grid;
  grid-template-columns: 1fr 525px 1fr;
  align-items: center;
  height: 177px;
  padding: 0 82px 0 60px;
  font-family: Inter, sans-serif;
`;
const Clock = styled.div`
  display: flex;
  align-items: center;
  gap: 12px;
  padding-left: 40px;
  font-size: 53px;
  font-weight: 600;
`;
const Island = styled.div`
  display: flex;
  align-items: center;
  height: 111px;
  padding-left: 38px;
  border-radius: 56px;
  background: #000000;
`;
const Signals = styled.div`
  display: flex;
  align-items: center;
  justify-content: flex-end;
  gap: 22px;
`;
const Bars = styled.div`
  display: flex;
  align-items: flex-end;
  gap: 7px;
`;
const Bar = styled.span`
  width: 11px;
  height: ${({ $height }) => $height}px;
  border-radius: 3px;
  background: ${({ $on }) => ($on ? "#000000" : "#c4c4c4")};
`;
const Network = styled.span`
  font-size: 44px;
  font-weight: 500;
`;
const Battery = styled.div`
  display: flex;
  align-items: center;
  gap: 3px;
`;
const BatteryBody = styled.div`
  width: 85px;
  height: 45px;
  border-radius: 14px;
  background: linear-gradient(to right, #ff3b30 14px, #ababab 14px);
  color: #ffffff;
  font-size: 40px;
  font-weight: 700;
  line-height: 45px;
  text-align: center;
`;
const BatteryCap = styled.span`
  width: 5px;
  height: 15px;
  border-radius: 0 5px 5px 0;
  background: #ababab;
`;
const Nav = styled.nav`
  display: flex;
  align-items: center;
  justify-content: space-between;
  height: 116px;
  padding: 0 60px 16px 40px;
`;
const IconButton = styled.button`
  display: flex;
  padding: 0;
  border: 0;
  background: none;
  cursor: pointer;
`;
const Content = styled.main`
  padding: 0 60px;
`;
const RunHeader = styled.div`
  padding: 72px 0 58px;
  border-bottom: 3px solid #e5e5e5;
`;
const RunDate = styled.p`
  color: #8d8d8d;
  font-size: 47px;
  line-height: 56px;
`;
const TitleRow = styled.div`
  display: flex;
  align-items: center;
  justify-content: space-between;
  margin-top: 26px;
  padding-right: 32px;
`;
const Title = styled.h1`
  font-size: 62px;
  font-weight: 500;
  line-height: 80px;
`;
const Distance = styled.p`
  padding: 118px 0 42px 26px;
  font-family: Roboto, sans-serif;
  font-size: 234px;
  font-style: italic;
  font-weight: 900;
  line-height: 220px;
  -webkit-text-stroke: 11px #000000;
`;
const Label = styled.p`
  display: block;
  color: #8d8d8d;
  font-size: 45px;
  line-height: 55px;
`;
const Stats = styled.dl`
  display: grid;
  grid-template-columns: repeat(3, 1fr);
  gap: 75px 72px;
  padding: 76px 0 72px;
`;
const Stat = styled.div`
  display: flex;
  flex-direction: column;
  gap: 4px;
`;
const Value = styled.dd`
  display: flex;
  align-items: center;
  gap: 20px;
  font-kerning: none;
  font-size: 78px;
  line-height: 88px;
  -webkit-text-stroke: 2px #000000;
`;
const MapCard = styled.section`
  position: relative;
  aspect-ratio: 1170 / 1200;
  overflow: hidden;
  border-radius: 16px 16px 0 0;
  background: #f7f8f2;
`;
const MapSvg = styled.svg`
  display: block;
  width: 100%;
  height: 100%;
`;
const Line = styled.path`
  fill: none;
  stroke-linecap: ${({ $butt }) => ($butt ? "butt" : "round")};
  stroke-linejoin: round;
  vector-effect: non-scaling-stroke;
`;
const RoadName = styled.text`
  fill: #999999;
  font-family: "Noto Sans CJK KR", sans-serif;
  font-size: 26px;
  font-weight: 500;
  paint-order: stroke;
  stroke: #ffffff;
  stroke-width: 5px;
  stroke-linejoin: round;
`;
const DistrictName = styled(RoadName)`
  fill: #a6a6a1;
  font-size: 42px;
  font-weight: 700;
`;
const ShieldNumber = styled.text`
  fill: #ffffff;
  font-family: "Noto Sans", sans-serif;
  font-size: 19px;
  font-weight: 700;
  text-anchor: middle;
`;
const Split = styled.g`
  filter: drop-shadow(0 6px 12px rgba(0, 0, 0, 0.15));
`;
const SplitText = styled.text`
  font-size: 42px;
  text-anchor: middle;
`;
const Place = styled.p`
  position: absolute;
  top: 60px;
  left: 60px;
  padding: 26px 30px;
  border-radius: 12px;
  background: #ffffff;
  box-shadow: 0 12px 48px rgba(0, 0, 0, 0.1);
  font-size: 40px;
  line-height: 57px;
`;
const Drawer = styled.button`
  position: fixed;
  right: 0;
  bottom: 258px;
  display: flex;
  align-items: center;
  justify-content: center;
  width: 72px;
  height: 287px;
  padding: 0 0 0 2px;
  border: 0;
  border-radius: 44px 0 0 44px;
  background: linear-gradient(#454445, #4f4d4f 40%, #4f4d4f 60%, #403f40);
  box-shadow: 0 40px 280px 70px rgba(0, 0, 0, 0.26);

  /* concave fillets where the tab meets the screen edge */
  &::before,
  &::after {
    content: "";
    position: absolute;
    right: 0;
    width: 8px;
    height: 8px;
  }
  &::before {
    bottom: 100%;
    background: radial-gradient(circle at 0 0, transparent 8px, #454445 8px);
  }
  &::after {
    top: 100%;
    background: radial-gradient(circle at 0 100%, transparent 8px, #403f40 8px);
  }
`;
const HomeIndicator = styled.div`
  position: fixed;
  bottom: 24px;
  left: 50%;
  width: 462px;
  height: 15px;
  border-radius: 8px;
  background: #000000;
  transform: translateX(-50%);
`;
